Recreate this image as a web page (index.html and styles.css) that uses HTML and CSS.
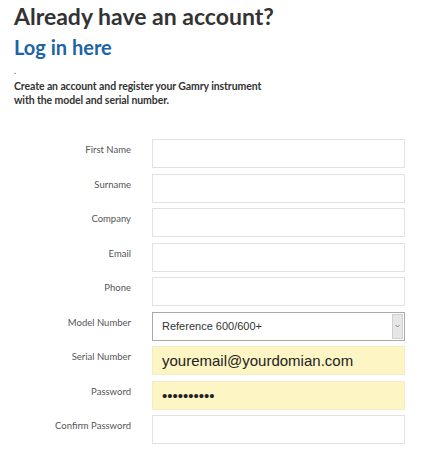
FILE: index.html
```html
<!DOCTYPE html>
<html lang="en">
<head>
    <meta charset="UTF-8">
    <title>Register</title>
    <link rel="stylesheet" href="styles.css">
</head>
<body>
    <div class="container">
        <h1>Already have an account?</h1>
        <h2><a href="#">Log in here</a></h2>
        <div class="dot">.</div>
        <p class="intro">Create an account and register your Gamry instrument<br>with the model and serial number.</p>

        <!-- registration form -->
        <form class="reg-form">
            <div class="row">
                <label for="first">First Name</label>
                <input type="text" id="first">
            </div>
            <div class="row">
                <label for="surname">Surname</label>
                <input type="text" id="surname">
            </div>
            <div class="row">
                <label for="company">Company</label>
                <input type="text" id="company">
            </div>
            <div class="row">
                <label for="email">Email</label>
                <input type="text" id="email">
            </div>
            <div class="row">
                <label for="phone">Phone</label>
                <input type="text" id="phone">
            </div>
            <div class="row">
                <label for="model">Model Number</label>
                <div class="select">
                    <span>Reference 600/600+</span>
                    <span class="arrow">
                        <svg width="5" height="4" viewBox="0 0 5 4"><path d="M0.5 1 L2.5 3 L4.5 1" fill="none" stroke="#888" stroke-width="1"/></svg>
                    </span>
                </div>
            </div>
            <div class="row">
                <label for="serial">Serial Number</label>
                <input type="text" id="serial" class="filled" value="youremail@yourdomian.com">
            </div>
            <div class="row">
                <label for="password">Password</label>
                <input type="password" id="password" class="filled pw" value="1234567890">
            </div>
            <div class="row">
                <label for="confirm">Confirm Password</label>
                <input type="password" id="confirm">
            </div>
        </form>
    </div>
</body>
</html>
```

FILE: styles.css
```css
body {
    margin: 0;
    padding: 0;
    background: #fff;
    font-family: Lato, "Open Sans", sans-serif;
    color: #333;
}
.container {
    padding: 0 14px;
}
h1 {
    margin: 0;
    padding-top: 1px;
    font-size: 23px;
    line-height: 30px;
    font-weight: 700;
    color: #333;
}
h2 {
    margin: 4px 0 0 0;
    font-size: 20px;
    line-height: 24px;
    font-weight: 700;
}
h2 a {
    color: #1c64a6;
    text-decoration: none;
}
.dot {
    font-size: 9px;
    line-height: 8px;
    height: 8px;
    margin-top: 8px;
    color: #555;
}
.intro {
    margin: 4px 0 0 0;
    font-size: 10.5px;
    line-height: 14px;
    font-weight: 700;
    letter-spacing: -0.1px;
    color: #333;
}
.reg-form {
    margin-top: 32px;
}
.row {
    display: grid;
    grid-template-columns: 117px 253px;
    column-gap: 21px;
    height: 29px;
    margin-bottom: 5.5px;
}
.row label {
    text-align: right;
    font-size: 9.5px;
    color: #555;
    padding-top: 5px;
}
.row input {
    box-sizing: border-box;
    width: 253px;
    height: 29px;
    margin: 0;
    border: 1px solid #e2e2e2;
    background: #fff;
    padding: 0 9px;
    font-family: "Liberation Sans", Arial, sans-serif;
    outline: none;
}
.row input.filled {
    background: #fdf5c4;
    border-color: #f3ecc6;
    font-size: 15px;
    color: #222;
}
.row input.pw {
    font-size: 15px;
    letter-spacing: 0;
}
.select {
    box-sizing: border-box;
    width: 253px;
    height: 29px;
    border: 1px solid #a9a9a9;
    display: flex;
    align-items: center;
    justify-content: space-between;
    padding-left: 9px;
    font-family: "Liberation Sans", Arial, sans-serif;
    font-size: 11px;
    color: #333;
}
.select .arrow {
    box-sizing: border-box;
    width: 11px;
    height: 25px;
    margin-right: 1px;
    background: #e6e6e6;
    border: 1px solid #cfcfcf;
    display: flex;
    align-items: center;
    justify-content: center;
}
```
